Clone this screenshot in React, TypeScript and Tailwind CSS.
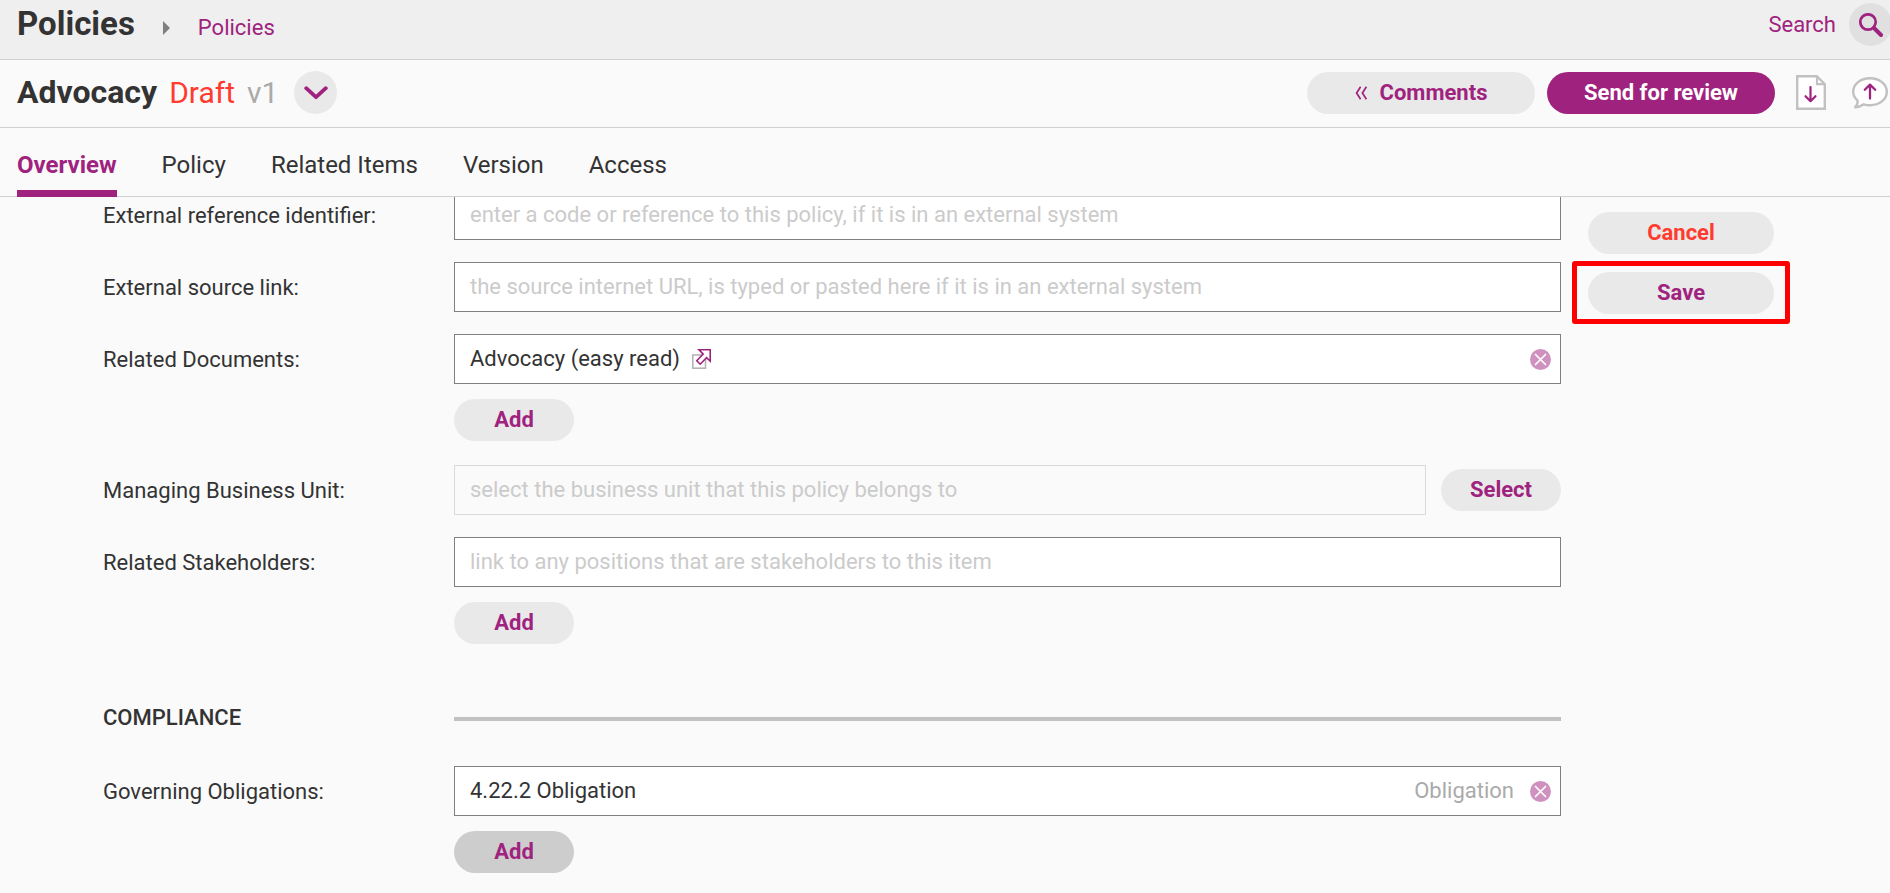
import type { ReactNode } from "react";

const TABS = ["Overview", "Policy", "Related Items", "Version", "Access"];

const pill =
  "h-[42px] shrink-0 cursor-pointer rounded-full text-[22px] leading-7 font-bold";
const inputBox =
  "h-[50px] w-full min-w-0 border px-[15px] pb-0.5 text-[22px] leading-7 placeholder:text-[#cbcbcb] outline-none";
const itemBox =
  "flex h-[50px] items-center border border-[#808080] bg-white pl-[15px] pr-[9px]";

function RemoveButton({ label }: { label: string }) {
  return (
    <button type="button" aria-label={label} className="ml-4 shrink-0 cursor-pointer">
      <svg width="21" height="21" viewBox="0 0 21 21" className="block">
        <circle cx="10.5" cy="10.5" r="10.5" fill="#cf91bf" />
        <path d="M5.5 5.5l10 10M15.5 5.5l-10 10" stroke="#fff" strokeWidth="1.7" strokeLinecap="round" />
      </svg>
    </button>
  );
}

function AddButton({ label, active = false }: { label: string; active?: boolean }) {
  return (
    <button
      type="button"
      aria-label={label}
      className={`${pill} mt-[15px] w-[120px] text-[#9f237e] ${active ? "bg-[#cdcdcd]" : "bg-[#e9e9e9]"}`}
    >
      Add
    </button>
  );
}

function Row({ label, htmlFor, children }: { label: string; htmlFor?: string; children: ReactNode }) {
  const text = "flex h-[50px] items-center pt-0.5";
  return (
    <div className="grid grid-cols-[351px_minmax(0,1fr)]">
      {htmlFor ? (
        <label htmlFor={htmlFor} className={text}>
          {label}
        </label>
      ) : (
        <span className={text}>{label}</span>
      )}
      <div>{children}</div>
    </div>
  );
}

export default function App() {
  return (
    <div className="flex min-h-screen flex-col bg-[#fafafa] font-[Roboto,sans-serif] text-[22px] leading-7 text-[#333333]">
      <header>
        <div className="flex h-[60px] items-start justify-between overflow-hidden border-b border-[#d0d0d0] bg-[#efefef] pl-[17px]">
          <nav aria-label="Breadcrumb" className="flex items-baseline pt-1">
            <h1 className="text-[33px] leading-10 font-bold">Policies</h1>
            <svg width="7" height="14" viewBox="0 0 7 14" className="mr-7 ml-7" aria-hidden="true">
              <path d="M0 0L7 7L0 14Z" fill="#808080" />
            </svg>
            <a href="#policies" className="text-[#9f237e]">
              Policies
            </a>
          </nav>
          <div className="-mr-0.5 flex items-center gap-[13px] pt-[3px] text-[#9f237e]">
            <a href="#search">Search</a>
            <button
              type="button"
              aria-label="Search"
              className="flex size-[43px] cursor-pointer items-center justify-center rounded-full bg-[#e0e0e0]"
            >
              <svg width="24" height="24" viewBox="0 0 24 24" fill="none" stroke="#9f237e" aria-hidden="true">
                <circle cx="9" cy="9" r="7.7" strokeWidth="2.7" />
                <path d="M15 15l7 7" strokeWidth="4" strokeLinecap="round" />
              </svg>
            </button>
          </div>
        </div>

        <div className="flex h-[68px] items-center justify-between border-b border-[#d0d0d0] pr-0.5 pb-0.5 pl-[17px]">
          <div className="flex items-center">
            <div className="flex items-baseline text-[30px] leading-10">
              <h2 className="text-[32px] leading-10 font-bold">Advocacy</h2>
              <span className="ml-3 text-[#ff3b30]">Draft</span>
              <span className="ml-3 text-[#aaaaaa]">v1</span>
            </div>
            <button
              type="button"
              aria-label="Version menu"
              className="ml-4 flex size-[43px] cursor-pointer items-center justify-center rounded-full bg-[#e9e9e9]"
            >
              <svg width="24" height="14" viewBox="0 0 24 14" fill="none" aria-hidden="true">
                <path d="M2.2 2.2L12 11.2L21.8 2.2" stroke="#9f237e" strokeWidth="3.8" strokeLinecap="round" strokeLinejoin="round" />
              </svg>
            </button>
          </div>
          <div className="flex items-center">
            <button
              type="button"
              className={`${pill} mr-3 flex w-[228px] items-center justify-center gap-3 bg-[#e9e9e9] text-[#9f237e]`}
            >
              <svg width="13" height="14" viewBox="0 0 13 14" fill="none" stroke="#9f237e" strokeWidth="1.7" aria-hidden="true">
                <path d="M5.6 .8L1.6 7L5.6 13.2M11.4 .8L7.4 7L11.4 13.2" />
              </svg>
              Comments
            </button>
            <button type="button" className={`${pill} mr-[21px] w-[228px] bg-[#9f237e] text-white`}>
              Send for review
            </button>
            <button type="button" aria-label="Download" className="mr-[26px] cursor-pointer">
              <svg width="30" height="35" viewBox="0 0 30 35" fill="none" className="block">
                <path d="M1.2 1.2H20.8L28.8 9.2V33.8H1.2Z" fill="#fff" stroke="#c1c1c1" strokeWidth="2.4" />
                <path d="M21 1.5V9.2H28.5" stroke="#c1c1c1" strokeWidth="2.2" />
                <path d="M14.5 12V26M9.5 21.2L14.5 26.2L19.5 21.2" stroke="#9f237e" strokeWidth="2.2" strokeLinecap="round" strokeLinejoin="round" />
              </svg>
            </button>
            <button type="button" aria-label="Share feedback" className="cursor-pointer">
              <svg width="36" height="32" viewBox="0 0 36 32" fill="none" className="block">
                <path
                  d="M18 1.2C27.3 1.2 34.8 7 34.8 14.8C34.8 22.6 27.3 28.2 18 28.2C15.8 28.2 13.7 27.9 11.8 27.3C9.2 29.2 6.5 30.2 3.2 30.2C5.2 28.2 5.8 25.8 5.6 23.6C2.9 21.2 1.2 18.2 1.2 14.8C1.2 7 8.7 1.2 18 1.2Z"
                  fill="#fff"
                  stroke="#c1c1c1"
                  strokeWidth="2.4"
                  strokeLinejoin="round"
                />
                <path d="M18 21.5V8M12.8 12.7L18 7.6L23.2 12.7" stroke="#9f237e" strokeWidth="2.3" strokeLinecap="round" strokeLinejoin="round" />
              </svg>
            </button>
          </div>
        </div>

        <nav
          aria-label="Policy sections"
          className="flex h-[69px] items-stretch gap-[45px] border-b border-[#d0d0d0] pl-[17px] text-[24px] leading-8"
        >
          {TABS.map((tab, i) => (
            <a
              key={tab}
              href={`#${tab.toLowerCase().replace(" ", "-")}`}
              aria-current={i === 0 ? "page" : undefined}
              className={
                i === 0
                  ? "-mb-px border-b-7 border-[#9f237e] pt-[21px] font-bold text-[#9f237e]"
                  : "pt-[21px]"
              }
            >
              {tab}
            </a>
          ))}
        </nav>
      </header>

      <main className="flex flex-1 items-start gap-[27px] overflow-hidden pr-[116px] pb-[19px] pl-[103px]">
        <form className="-mt-[7px] flex min-w-0 flex-1 flex-col gap-[22px]">
          <Row label="External reference identifier:" htmlFor="ext-ref">
            <input
              id="ext-ref"
              type="text"
              placeholder="enter a code or reference to this policy, if it is in an external system"
              className={`${inputBox} border-[#808080] bg-white`}
            />
          </Row>
          <Row label="External source link:" htmlFor="ext-link">
            <input
              id="ext-link"
              type="text"
              placeholder="the source internet URL, is typed or pasted here if it is in an external system"
              className={`${inputBox} border-[#808080] bg-white`}
            />
          </Row>
          <Row label="Related Documents:">
            <div className={itemBox}>
              <a href="#advocacy-easy-read" className="flex items-center gap-3">
                Advocacy (easy read)
                <svg width="19" height="20" viewBox="0 0 19 20" fill="none" aria-hidden="true">
                  <rect x=".8" y="6" width="12.7" height="13.2" stroke="#b5b5b5" strokeWidth="1.6" />
                  <path
                    d="M7 .8H18.2V12.2L14.6 8.7L8.2 15.2L4.8 11.7L11.2 5.1Z"
                    fill="#fff"
                    stroke="#9f237e"
                    strokeWidth="1.6"
                  />
                </svg>
              </a>
              <span className="flex-1" />
              <RemoveButton label="Remove Advocacy (easy read)" />
            </div>
            <AddButton label="Add related document" />
          </Row>
          <div className="mt-0.5">
            <Row label="Managing Business Unit:" htmlFor="business-unit">
              <div className="flex items-center gap-[15px]">
                <input
                  id="business-unit"
                  type="text"
                  readOnly
                  placeholder="select the business unit that this policy belongs to"
                  className={`${inputBox} border-[#d9d9d9] bg-transparent`}
                />
                <button type="button" className={`${pill} w-[120px] bg-[#e9e9e9] text-[#9f237e]`}>
                  Select
                </button>
              </div>
            </Row>
          </div>
          <Row label="Related Stakeholders:" htmlFor="stakeholders">
            <input
              id="stakeholders"
              type="text"
              placeholder="link to any positions that are stakeholders to this item"
              className={`${inputBox} border-[#808080] bg-white`}
            />
            <AddButton label="Add related stakeholder" />
          </Row>
          <div className="mt-[35px] mb-2 grid grid-cols-[351px_minmax(0,1fr)] items-center">
            <h3 className="pt-[3px] pb-1 font-medium">COMPLIANCE</h3>
            <div className="h-1 bg-[#c1c1c1]" />
          </div>
          <Row label="Governing Obligations:">
            <div className={itemBox}>
              <span className="flex-1">4.22.2 Obligation</span>
              <span className="text-[#aaaaaa]">Obligation</span>
              <RemoveButton label="Remove 4.22.2 Obligation" />
            </div>
            <AddButton label="Add governing obligation" active />
          </Row>
        </form>

        <aside className="flex w-[186px] shrink-0 flex-col gap-[18px] pt-[15px]">
          <button type="button" className={`${pill} bg-[#e9e9e9] text-[#ff3b30]`}>
            Cancel
          </button>
          <div className="relative flex flex-col">
            <button type="button" className={`${pill} bg-[#e9e9e9] text-[#9f237e]`}>
              Save
            </button>
            <div className="pointer-events-none absolute -inset-x-4 -top-[11px] -bottom-2.5 rounded-[3px] border-5 border-[#ff0000]" />
          </div>
        </aside>
      </main>
    </div>
  );
}
